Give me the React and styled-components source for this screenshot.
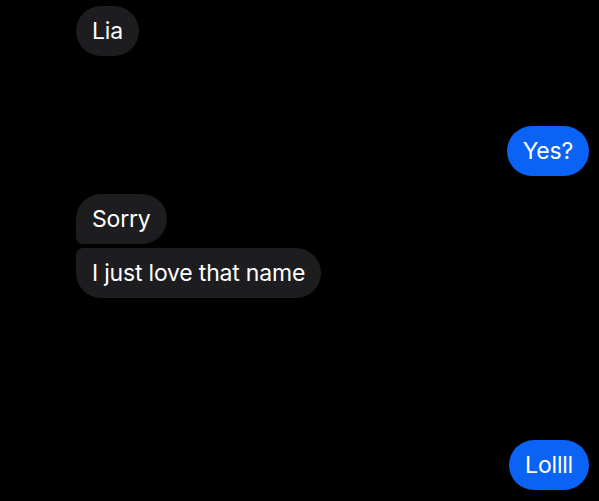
import React from "react"
import styled, { createGlobalStyle } from "styled-components"

const GlobalStyle = createGlobalStyle`
    html, body {
        margin: 0;
        background: #000;
    }
`

const Thread = styled.div`
    display: flex;
    flex-direction: column;
    padding: 6px 10px 0 76px;
    height: 501px;
    box-sizing: border-box;
    background: #000;
    font-family: Inter, "Noto Sans", sans-serif;
`

const Bubble = styled.div`
    align-self: ${props => props.$mine ? "flex-end" : "flex-start"};
    margin-top: ${props => props.$gap || 0}px;
    background: ${props => props.$mine ? "#0a63f5" : "#1d1d1f"};
    color: #fff;
    font-size: 23px;
    line-height: 26px;
    letter-spacing: -0.2px;
    padding: 12px 16px;
    border-radius: ${props => props.$corners || "25px"};
    white-space: nowrap;
`

const messages = [
    { text: "Lia", gap: 0 },
    { text: "Yes?", mine: true, gap: 70 },
    { text: "Sorry", gap: 18, corners: "25px 25px 25px 7px" },
    { text: "I just love that name", gap: 4, corners: "7px 25px 25px 25px" },
    { text: "Lollll", mine: true, gap: 142 },
]

const App = () => {
    return (
        <>
            <GlobalStyle />
            <Thread>
                {messages.map((m, i) => (
                    <Bubble key={i} $mine={m.mine} $gap={m.gap} $corners={m.corners}>
                        {m.text}
                    </Bubble>
                ))}
            </Thread>
        </>
    )
}

export default App
